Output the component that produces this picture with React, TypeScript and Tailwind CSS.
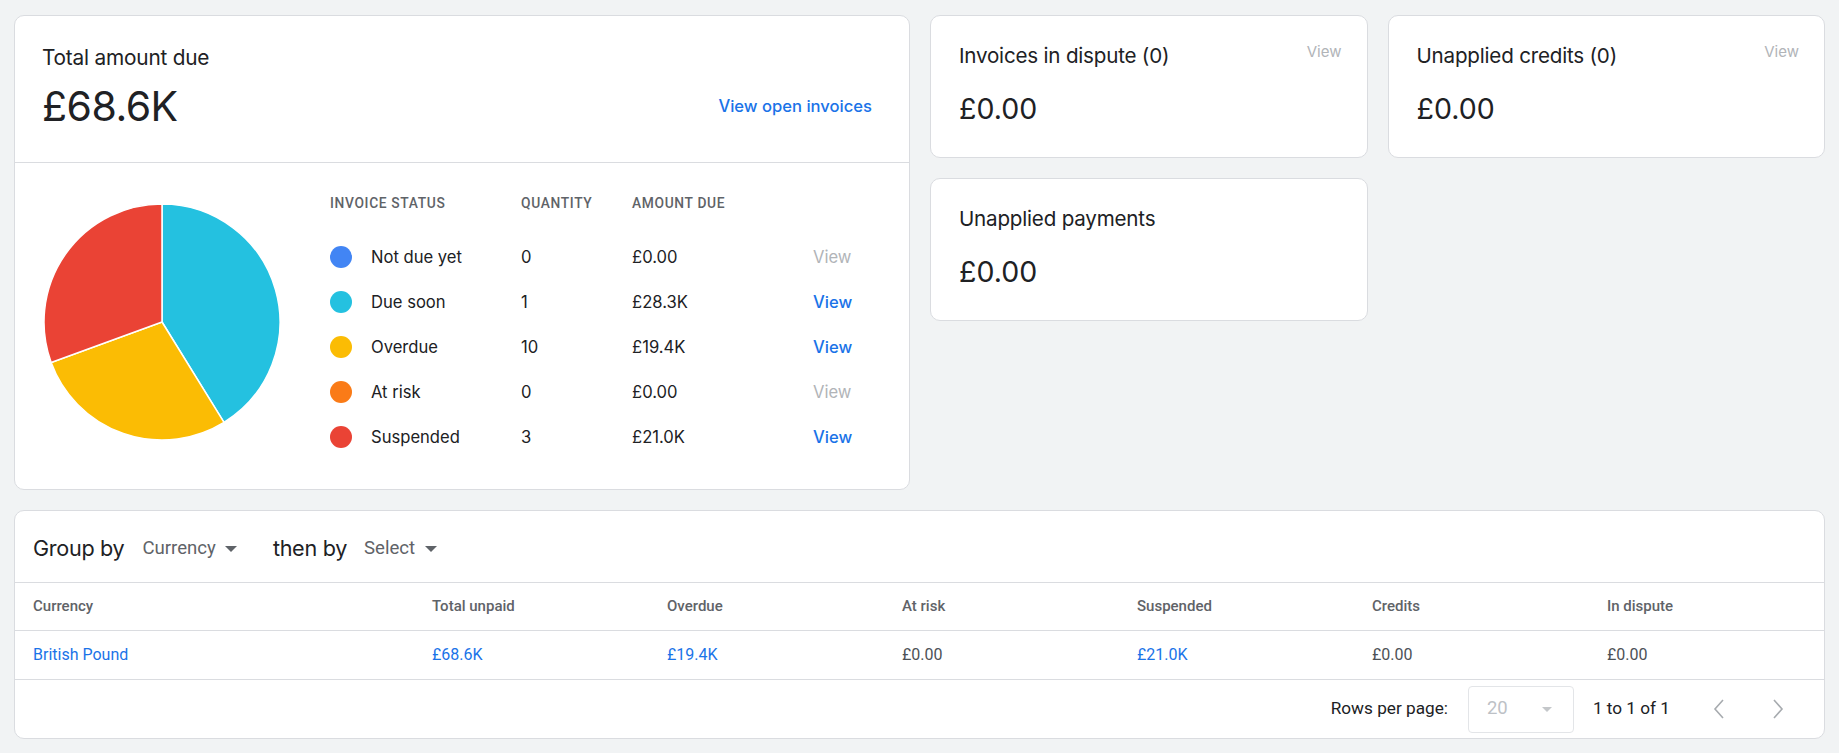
import React from "react";

const SANS = "font-['Inter','Noto_Sans',sans-serif]";
const ROBOTO = "font-['Roboto','Liberation_Sans',sans-serif]";

type StatusRow = {
  label: string;
  color: string;
  qty: string;
  amount: string;
  active: boolean;
};

const statusRows: StatusRow[] = [
  { label: "Not due yet", color: "bg-[#4285f4]", qty: "0", amount: "£0.00", active: false },
  { label: "Due soon", color: "bg-[#24c1e0]", qty: "1", amount: "£28.3K", active: true },
  { label: "Overdue", color: "bg-[#fbbc04]", qty: "10", amount: "£19.4K", active: true },
  { label: "At risk", color: "bg-[#fa7b17]", qty: "0", amount: "£0.00", active: false },
  { label: "Suspended", color: "bg-[#ea4335]", qty: "3", amount: "£21.0K", active: true },
];

function polar(cx: number, cy: number, r: number, deg: number) {
  const a = (deg * Math.PI) / 180;
  return [cx + r * Math.sin(a), cy - r * Math.cos(a)];
}

function PieChart() {
  const slices = [
    { value: 28.3, color: "#24c1e0" },
    { value: 19.4, color: "#fbbc04" },
    { value: 21.0, color: "#ea4335" },
  ];
  const total = slices.reduce((s, x) => s + x.value, 0);
  const r = 118;
  let start = 0;
  return (
    <svg width="236" height="236" viewBox="0 0 236 236" className="overflow-visible shrink-0">
      {slices.map((s, i) => {
        const sweep = (s.value / total) * 360;
        const [x1, y1] = polar(118, 118, r, start);
        const [x2, y2] = polar(118, 118, r, start + sweep);
        const large = sweep > 180 ? 1 : 0;
        const d = `M118 118 L${x1} ${y1} A${r} ${r} 0 ${large} 1 ${x2} ${y2} Z`;
        start += sweep;
        return <path key={i} d={d} fill={s.color} stroke="#ffffff" strokeWidth="1.5" strokeLinejoin="round" />;
      })}
    </svg>
  );
}

function Caret({ className }: { className: string }) {
  return (
    <svg width="12" height="6" viewBox="0 0 12 6" className={className}>
      <path d="M0 0 L12 0 L6 6 Z" fill="currentColor" />
    </svg>
  );
}

function SummaryCard({ title, amount, view }: { title: string; amount: string; view?: boolean }) {
  return (
    <div className="h-[143px] rounded-[10px] border border-[#dadce0] bg-white pl-[28px] pr-[25px] pt-[26px]">
      <div className="flex items-start justify-between">
        <div className={`${SANS} text-[20.6px] leading-[28px] text-[#202124] tracking-[-0.2px]`}>{title}</div>
        {view && <div className={`${SANS} text-[15px] leading-[20px] text-[#b1b4b8]`}>View</div>}
      </div>
      <div className={`${SANS} mt-[19px] text-[28.5px] leading-[40px] text-[#202124]`}>{amount}</div>
    </div>
  );
}

const tableHeaders = ["Currency", "Total unpaid", "Overdue", "At risk", "Suspended", "Credits", "In dispute"];
const tableRow: { text: string; link: boolean }[] = [
  { text: "British Pound", link: true },
  { text: "£68.6K", link: true },
  { text: "£19.4K", link: true },
  { text: "£0.00", link: false },
  { text: "£21.0K", link: true },
  { text: "£0.00", link: false },
  { text: "£0.00", link: false },
];

export default function App() {
  return (
    <div className="min-h-screen bg-[#f1f3f4] px-[14px] pt-[15px] pb-[15px]">
      <div className="flex gap-[20px]">
        {/* Total amount due */}
        <div className="w-[896px] shrink-0 h-[475px] rounded-[10px] border border-[#dadce0] bg-white">
          <div className="h-[147px] border-b border-[#dadce0] pl-[27px] pr-[37px] pt-[28px]">
            <div className={`${SANS} text-[20.8px] leading-[28px] text-[#202124] tracking-[-0.2px]`}>Total amount due</div>
            <div className="mt-[10px] flex items-center justify-between">
              <div className={`${SANS} text-[41px] leading-[48px] text-[#202124] tracking-[-0.5px]`}>£68.6K</div>
              <a className={`${SANS} text-[16.6px] font-medium leading-[22px] text-[#1a73e8]`}>View open invoices</a>
            </div>
          </div>
          <div className="flex h-[326px] pl-[29px]">
            <div className="pt-[41px]">
              <PieChart />
            </div>
            <div className="ml-[50px] pt-[30px]">
              <div
                className={`${ROBOTO} grid grid-cols-[191px_111px_181px_60px] h-[20px] items-center text-[13.8px] font-medium uppercase tracking-[0.65px] text-[#5f6368]`}
              >
                <div>Invoice status</div>
                <div>Quantity</div>
                <div>Amount due</div>
                <div />
              </div>
              <div className="mt-[21px]">
                {statusRows.map((r) => (
                  <div
                    key={r.label}
                    className={`${SANS} grid grid-cols-[191px_111px_181px_60px] h-[45px] items-center text-[16.6px] leading-[24px] text-[#202124]`}
                  >
                    <div className="flex items-center gap-[19px]">
                      <span className={`h-[22px] w-[22px] rounded-full ${r.color}`} />
                      <span>{r.label}</span>
                    </div>
                    <div>{r.qty}</div>
                    <div>{r.amount}</div>
                    <div className={r.active ? "font-medium text-[#1a73e8]" : "text-[#b1b4b8]"}>View</div>
                  </div>
                ))}
              </div>
            </div>
          </div>
        </div>

        {/* Side summary cards */}
        <div className="grid flex-1 grid-cols-2 content-start gap-[20px]">
          <SummaryCard title="Invoices in dispute (0)" amount="£0.00" view />
          <SummaryCard title="Unapplied credits (0)" amount="£0.00" view />
          <SummaryCard title="Unapplied payments" amount="£0.00" />
        </div>
      </div>

      {/* Grouped table */}
      <div className="mt-[20px] rounded-[10px] border border-[#dadce0] bg-white">
        <div className="flex h-[72px] items-center border-b border-[#dadce0] pl-[18px] pt-[4px]">
          <span className={`${SANS} text-[21.6px] text-[#202124] tracking-[-0.3px]`}>Group by</span>
          <span className={`${ROBOTO} ml-[18px] text-[18.6px] text-[#5f6368]`}>Currency</span>
          <Caret className="ml-[9px] text-[#5f6368]" />
          <span className={`${SANS} ml-[36px] text-[21.6px] text-[#202124] tracking-[-0.3px]`}>then by</span>
          <span className={`${ROBOTO} ml-[17px] text-[18.6px] text-[#5f6368]`}>Select</span>
          <Caret className="ml-[10px] text-[#5f6368]" />
        </div>
        <div
          className={`${ROBOTO} grid h-[48px] grid-cols-[399px_repeat(6,minmax(0,1fr))] items-center border-b border-[#dadce0] text-[15px] font-medium text-[#5f6368]`}
        >
          {tableHeaders.map((h) => (
            <div key={h} className="pl-[18px]">
              {h}
            </div>
          ))}
        </div>
        <div
          className={`${ROBOTO} grid h-[49px] grid-cols-[399px_repeat(6,minmax(0,1fr))] items-center border-b border-[#dadce0] text-[16px]`}
        >
          {tableRow.map((c, i) => (
            <div key={i} className={`pl-[18px] ${c.link ? "text-[#1a73e8]" : "text-[#4d5156]"}`}>
              {c.text}
            </div>
          ))}
        </div>
        <div className={`${ROBOTO} flex h-[58px] items-center justify-end pr-[22px] text-[17.2px] text-[#202124]`}>
          <span>Rows per page:</span>
          <div className="ml-[20px] flex h-[47px] w-[106px] items-center justify-between rounded-[4px] border border-[#e3e5e8] pl-[18px] pr-[21px] text-[#bdc1c6]">
            <span className="text-[18.5px]">20</span>
            <svg width="10" height="5" viewBox="0 0 10 5">
              <path d="M0 0 L10 0 L5 5 Z" fill="#c4c7ca" />
            </svg>
          </div>
          <span className="ml-[19px]">1 to 1 of 1</span>
          <div className="ml-[25px] flex">
            <button className="flex h-[40px] w-[48px] items-center justify-center">
              <svg width="14" height="20" viewBox="0 0 14 20">
                <path d="M11 1 L3 10 L11 19" fill="none" stroke="#a7abaf" strokeWidth="1.6" />
              </svg>
            </button>
            <button className="ml-[11px] flex h-[40px] w-[48px] items-center justify-center">
              <svg width="14" height="20" viewBox="0 0 14 20">
                <path d="M3 1 L11 10 L3 19" fill="none" stroke="#a7abaf" strokeWidth="1.6" />
              </svg>
            </button>
          </div>
        </div>
      </div>
    </div>
  );
}
